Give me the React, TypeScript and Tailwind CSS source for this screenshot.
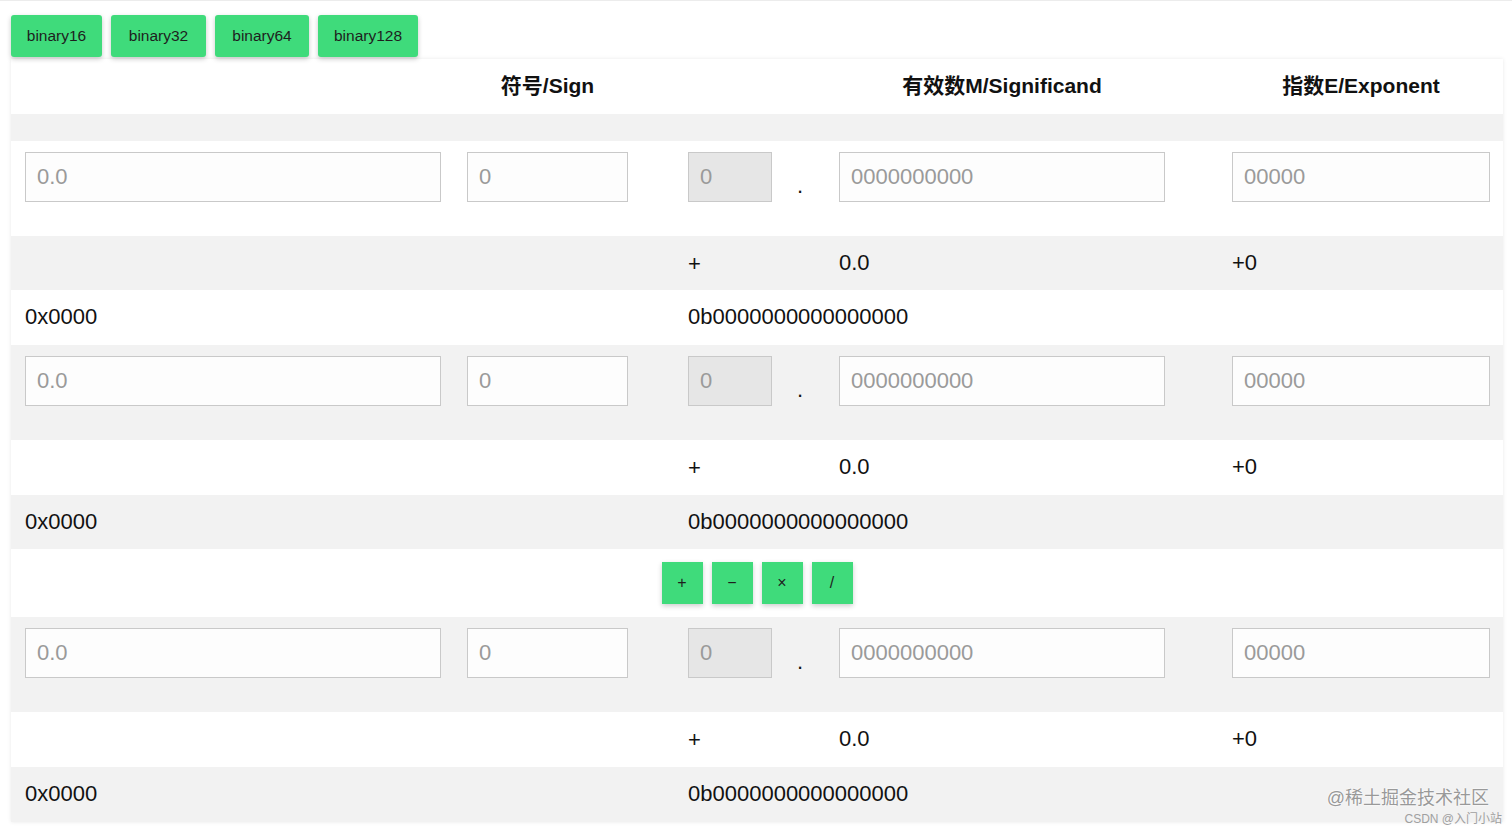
import React from "react";

const FONT = { fontFamily: '"Liberation Sans", "Noto Sans CJK SC", Arial, sans-serif' };
const COLS = "grid grid-cols-[443px_220px_111px_40px_393px_285px]";

function Field({ w, value, disabled }: { w: string; value: string; disabled?: boolean }) {
  return (
    <div
      className={`${w} h-[50px] border border-[#c9c9c9] flex items-center pl-[11px] pb-[1px] text-[22px] text-[#9a9a9a] ${
        disabled ? "bg-[#e6e6e6]" : "bg-[#fdfdfd]"
      }`}
    >
      {value}
    </div>
  );
}

function InputRow({ bg }: { bg: string }) {
  return (
    <div className={`${COLS} h-[95px] items-start pt-[11px] ${bg}`}>
      <div className="pl-[14px]">
        <Field w="w-[416px]" value="0.0" />
      </div>
      <div className="pl-[13px]">
        <Field w="w-[161px]" value="0" />
      </div>
      <div className="pl-[14px]">
        <Field w="w-[84px]" value="0" disabled />
      </div>
      <div className="pl-[12px] pt-[23px] text-[22px] leading-none text-[#111]">.</div>
      <div className="pl-[14px]">
        <Field w="w-[326px]" value="0000000000" />
      </div>
      <div className="pl-[14px]">
        <Field w="w-[258px]" value="00000" />
      </div>
    </div>
  );
}

function ValueRow({ bg, h }: { bg: string; h: string }) {
  return (
    <div className={`${COLS} ${h} items-center pb-[2px] text-[22px] text-[#111] ${bg}`}>
      <div />
      <div />
      <div className="pl-[14px] pt-[2px]">+</div>
      <div />
      <div className="pl-[14px]">0.0</div>
      <div className="pl-[14px]">+0</div>
    </div>
  );
}

function HexRow({ bg, h }: { bg: string; h: string }) {
  return (
    <div className={`${COLS} ${h} items-center pb-[2px] text-[22px] text-[#111] ${bg}`}>
      <div className="pl-[14px]">0x0000</div>
      <div />
      <div className="pl-[14px] col-span-4">0b0000000000000000</div>
    </div>
  );
}

const btn =
  "h-[42px] bg-[#3fdb7b] rounded-[3px] shadow-[0_2px_5px_rgba(0,0,0,0.22)] flex items-center justify-center text-[15.5px] text-[#1e1e1e]";
const opBtn =
  "w-[41px] h-[42px] bg-[#3fdb7b] shadow-[0_2px_5px_rgba(0,0,0,0.2)] flex items-center justify-center text-[16px] text-[#1e1e1e]";

export default function App() {
  return (
    <div
      className="relative w-[1512px] h-[831px] bg-white overflow-hidden pt-[15px] pl-[11px] border-t border-[#ececec]"
      style={FONT}
    >
      <div className="flex gap-[9px] h-[42px] mb-[2px] -mt-[1px]">
        <div className={`${btn} w-[91px]`}>binary16</div>
        <div className={`${btn} w-[95px]`}>binary32</div>
        <div className={`${btn} w-[94px]`}>binary64</div>
        <div className={`${btn} w-[100px]`}>binary128</div>
      </div>

      <div className="w-[1492px] shadow-[0_0_4px_rgba(0,0,0,0.09)]">
        <div className={`${COLS} h-[55px] items-center pb-[2px] bg-white text-[21px] font-bold text-[#111]`}>
          <div />
          <div className="pl-[13px]">
            <div className="w-[161px] text-center">符号/Sign</div>
          </div>
          <div />
          <div />
          <div className="pl-[14px]">
            <div className="w-[326px] text-center">有效数M/Significand</div>
          </div>
          <div className="pl-[14px]">
            <div className="w-[258px] text-center">指数E/Exponent</div>
          </div>
        </div>
        <div className="h-[27px] bg-[#f2f2f2]" />

        <InputRow bg="bg-white" />
        <ValueRow bg="bg-[#f2f2f2]" h="h-[54px]" />
        <HexRow bg="bg-white" h="h-[55px]" />

        <InputRow bg="bg-[#f2f2f2]" />
        <ValueRow bg="bg-white" h="h-[55px]" />
        <HexRow bg="bg-[#f2f2f2]" h="h-[54px]" />

        <div className="h-[68px] bg-white flex items-center justify-center gap-[9px]">
          <div className={opBtn}>+</div>
          <div className={opBtn}>−</div>
          <div className={opBtn}>×</div>
          <div className={opBtn}>/</div>
        </div>

        <InputRow bg="bg-[#f2f2f2]" />
        <ValueRow bg="bg-white" h="h-[55px]" />
        <HexRow bg="bg-[#f2f2f2]" h="h-[55px]" />
      </div>

      <div className="absolute right-[23px] bottom-[24px] text-[18px] text-[#999] leading-none [text-shadow:0_0_2px_#fff,0_0_2px_#fff]">
        @稀土掘金技术社区
      </div>
      <div className="absolute right-[10px] bottom-[6px] text-[12px] text-[#a0a0a0] leading-none">
        CSDN @入门小站
      </div>
    </div>
  );
}
